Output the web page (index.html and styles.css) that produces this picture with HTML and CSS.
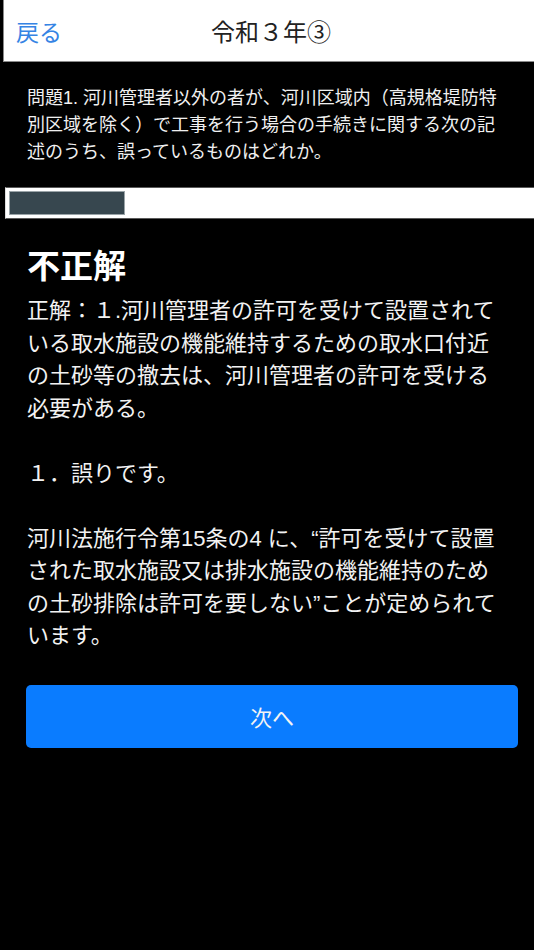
FILE: index.html
```html
<!DOCTYPE html>
<html lang="ja">
<head>
<meta charset="utf-8">
<title>令和３年③</title>
<link rel="stylesheet" href="styles.css">
</head>
<body>
<header class="topbar">
  <a class="back" href="#">戻る</a>
  <div class="title">令和３年③</div>
  <div class="spacer"></div>
</header>
<p class="question">問題1. 河川管理者以外の者が、河川区域内（高規格堤防特別区域を除く）で工事を行う場合の手続きに関する次の記述のうち、誤っているものはどれか。</p>
<div class="progress"><div class="progress-fill" style="width:116px"></div></div>
<section class="result">
  <h2 class="verdict">不正解</h2>
  <p class="explain">正解：１.河川管理者の許可を受けて設置されている取水施設の機能維持するための取水口付近の土砂等の撤去は、河川管理者の許可を受ける必要がある。<br><br>１．誤りです。<br><br>河川法施行令第15条の4 に、“許可を受けて設置された取水施設又は排水施設の機能維持のための土砂排除は許可を要しない”ことが定められています。</p>
</section>
<div class="actions">
  <button class="next">次へ</button>
</div>
</body>
</html>
```
FILE: styles.css
```css
html, body {
  margin: 0;
  padding: 0;
  background: #000;
}
body {
  font-family: "Liberation Sans", "Noto Sans CJK JP", sans-serif;
  color: #f2f2f2;
}
.topbar {
  margin-left: 3px;
  height: 61px;
  background: #fff;
  border-left: 1px solid #8a8a8a;
  border-bottom: 1px solid #8a8a8a;
  display: grid;
  grid-template-columns: 1fr auto 1fr;
  align-items: center;
}
.back {
  padding-left: 12px;
  font-size: 23px;
  color: #3584e4;
  text-decoration: none;
}
.title {
  font-size: 24px;
  color: #222;
  padding-left: 4px;
}
.question {
  margin: 0;
  padding: 23px 27px 0 27px;
  font-size: 18px;
  line-height: 27px;
  color: #f0f0f0;
}
.progress {
  margin: 21px 0 0 5px;
  background: #fff;
  border-top: 1px solid #5a5a5a;
  border-bottom: 1px solid #5a5a5a;
  border-left: 1px solid #ddd;
  padding: 3px 3px;
  box-sizing: border-box;
  height: 32px;
}
.progress-fill {
  height: 100%;
  background: #37474f;
  border: 1px solid #9aa4a8;
  box-sizing: border-box;
}
.result {
  padding: 0 27px;
}
.verdict {
  margin: 26px 0 0 0;
  font-size: 33px;
  line-height: 44px;
  font-weight: bold;
  color: #fff;
}
.explain {
  margin: 6px 0 0 0;
  font-size: 22px;
  line-height: 32.5px;
  color: #f2f2f2;
}
.actions {
  padding: 32px 16px 0 26px;
}
.next {
  display: block;
  width: 100%;
  height: 63px;
  border: none;
  border-radius: 5px;
  background: #0a7cff;
  color: #f4f4f4;
  font-family: "Liberation Sans", "Noto Sans CJK JP", sans-serif;
  font-size: 22px;
}
```
